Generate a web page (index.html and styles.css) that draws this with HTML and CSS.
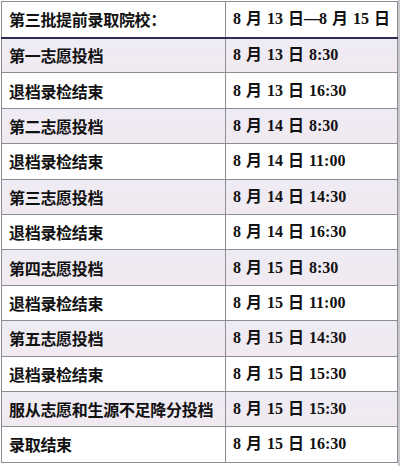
FILE: index.html
```html
<!DOCTYPE html>
<html lang="zh">
<head>
<meta charset="utf-8">
<link rel="stylesheet" href="styles.css">
</head>
<body>
<table class="schedule">
  <tr class="head"><td class="label">第三批提前录取院校：</td><td class="time">8 月 13 日<span class="dash">—</span>8 月 15 日</td></tr>
  <tr class="alt"><td class="label">第一志愿投档</td><td class="time">8 月 13 日 8:30</td></tr>
  <tr><td class="label">退档录检结束</td><td class="time">8 月 13 日 16:30</td></tr>
  <tr class="alt"><td class="label">第二志愿投档</td><td class="time">8 月 14 日 8:30</td></tr>
  <tr><td class="label">退档录检结束</td><td class="time">8 月 14 日 11:00</td></tr>
  <tr class="alt"><td class="label">第三志愿投档</td><td class="time">8 月 14 日 14:30</td></tr>
  <tr><td class="label">退档录检结束</td><td class="time">8 月 14 日 16:30</td></tr>
  <tr class="alt"><td class="label">第四志愿投档</td><td class="time">8 月 15 日 8:30</td></tr>
  <tr><td class="label">退档录检结束</td><td class="time">8 月 15 日 11:00</td></tr>
  <tr class="alt"><td class="label">第五志愿投档</td><td class="time">8 月 15 日 14:30</td></tr>
  <tr><td class="label">退档录检结束</td><td class="time">8 月 15 日 15:30</td></tr>
  <tr class="alt"><td class="label">服从志愿和生源不足降分投档</td><td class="time">8 月 15 日 15:30</td></tr>
  <tr><td class="label">录取结束</td><td class="time">8 月 15 日 16:30</td></tr>
</table>
</body>
</html>
```
FILE: styles.css
```css
html, body {
  margin: 0;
  padding: 0;
  background: #ffffff;
}
body {
  width: 400px;
  height: 466px;
  overflow: hidden;
  background: linear-gradient(to right, #ffffff 398px, #c8c8cc 398px);
}
.schedule {
  border-collapse: collapse;
  margin: 1px 0 0 1px;
  width: 397px;
  table-layout: fixed;
  background: #ffffff;
}
.schedule td {
  border: 1px solid #8d8d94;
  height: 35.4px;
  padding: 0 0 0 7px;
  color: #111111;
  font-weight: 700;
  font-size: 16px;
  line-height: 18px;
  white-space: nowrap;
  vertical-align: middle;
  box-sizing: border-box;
}
.schedule .label {
  width: 224px;
  font-family: "Noto Sans CJK SC", "Noto Sans", sans-serif;
  letter-spacing: -0.3px;
}
.schedule .time {
  font-family: "Liberation Serif", "Noto Sans CJK SC", serif;
  word-spacing: 1px;
}
.schedule .dash {
  letter-spacing: -1px;
}
.schedule .head td {
  height: 36px;
  border-bottom: 2px solid #2f2c55;
}
.schedule .alt td {
  background: linear-gradient(to bottom, #eeebf4, #f1e9f0);
}
```
